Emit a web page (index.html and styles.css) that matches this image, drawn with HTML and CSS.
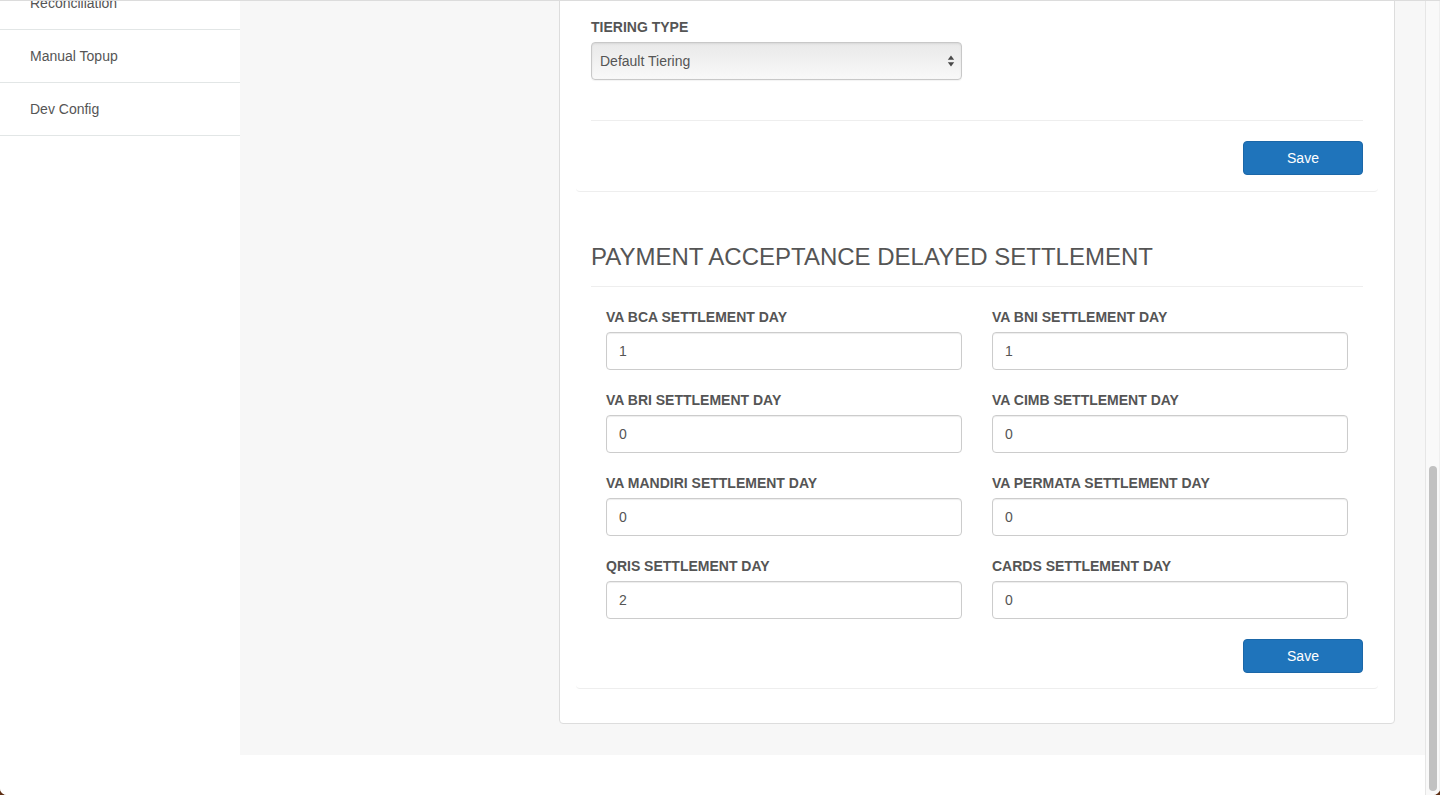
FILE: index.html
```html
<!DOCTYPE html>
<html lang="en">
<head>
<meta charset="utf-8">
<title>Settings</title>
<link rel="stylesheet" href="styles.css">
</head>
<body>
<div class="app">
  <aside class="sidebar">
    <ul class="nav">
      <li class="nav-item">Reconciliation</li>
      <li class="nav-item">Manual Topup</li>
      <li class="nav-item">Dev Config</li>
    </ul>
  </aside>
  <main class="main">
    <div class="content">
      <div class="card">
        <section class="panel panel-first">
          <div class="form-group">
            <label class="label">TIERING TYPE</label>
            <div class="select-wrap">
              <select class="select"><option>Default Tiering</option></select>
              <svg class="select-arrows" width="8" height="12" viewBox="0 0 8 12"><path d="M4 0.5 L7.2 4.8 H0.8 Z M4 11.5 L7.2 7.2 H0.8 Z" fill="#4a4a4a"/></svg>
            </div>
          </div>
          <hr class="rule rule-top">
          <div class="actions"><button class="btn">Save</button></div>
        </section>
        <section class="panel">
          <h3 class="panel-title">PAYMENT ACCEPTANCE DELAYED SETTLEMENT</h3>
          <hr class="rule rule-title">
          <div class="grid">
            <div class="field"><label class="label">VA BCA SETTLEMENT DAY</label><input class="input" value="1"></div>
            <div class="field"><label class="label">VA BNI SETTLEMENT DAY</label><input class="input" value="1"></div>
            <div class="field"><label class="label">VA BRI SETTLEMENT DAY</label><input class="input" value="0"></div>
            <div class="field"><label class="label">VA CIMB SETTLEMENT DAY</label><input class="input" value="0"></div>
            <div class="field"><label class="label">VA MANDIRI SETTLEMENT DAY</label><input class="input" value="0"></div>
            <div class="field"><label class="label">VA PERMATA SETTLEMENT DAY</label><input class="input" value="0"></div>
            <div class="field"><label class="label">QRIS SETTLEMENT DAY</label><input class="input" value="2"></div>
            <div class="field"><label class="label">CARDS SETTLEMENT DAY</label><input class="input" value="0"></div>
          </div>
          <div class="actions"><button class="btn">Save</button></div>
        </section>
      </div>
    </div>
  </main>
  <div class="scrollbar"><div class="thumb"></div></div>
</div>
</body>
</html>
```

FILE: styles.css
```css
html {
  background: #5e2f14;
}
body {
  margin: 0;
  height: 795px;
  background: #ffffff;
  border-radius: 0 0 7px 7px;
  overflow: hidden;
  font-family: "Liberation Sans", Arial, sans-serif;
  color: #555555;
}
.app {
  display: flex;
  height: 794px;
  border-top: 1px solid #dcdcdc;
  overflow: hidden;
}
.sidebar {
  width: 240px;
  flex: none;
  background: #ffffff;
}
.nav {
  list-style: none;
  margin: -24px 0 0 0;
  padding: 0;
}
.nav-item {
  height: 52px;
  line-height: 52px;
  padding-left: 30px;
  font-size: 14px;
  color: #555555;
  border-bottom: 1px solid #e2e6e6;
}
.main {
  flex: 1;
  background: #ffffff;
}
.content {
  background: #f7f7f7;
  padding: 0 30px 31px 319px;
}
.card {
  margin-top: -16px;
  background: #ffffff;
  border: 1px solid #dddddd;
  border-radius: 4px;
  padding: 16px 16px 34px;
}
.panel {
  padding: 15px;
  border-bottom: 1px solid #eeeeee;
  border-radius: 0 0 4px 4px;
}
.panel-first {
  padding-bottom: 16px;
}
.form-group {
  margin-bottom: 0;
}
.label {
  display: block;
  font-size: 14px;
  line-height: 20px;
  font-weight: bold;
  color: #555555;
  margin-bottom: 5px;
}
.select-wrap {
  position: relative;
  width: 371px;
}
.select {
  -webkit-appearance: none;
  appearance: none;
  display: block;
  width: 100%;
  height: 38px;
  margin: 0;
  padding: 0 24px 0 8px;
  font-family: "Liberation Sans", Arial, sans-serif;
  font-size: 14px;
  color: #555555;
  border: 1px solid #c8c8c8;
  border-radius: 4px;
  background: linear-gradient(#e9e9e9 0%, #efefef 40%, #f9f9f9 100%);
  box-shadow: inset 0 1px 2px rgba(0, 0, 0, 0.08), 0 1px 1px rgba(0, 0, 0, 0.05);
}
.select-arrows {
  position: absolute;
  right: 7px;
  top: 13px;
  pointer-events: none;
}
.rule {
  border: 0;
  border-top: 1px solid #eeeeee;
  margin: 0;
}
.rule-top {
  margin: 40px 0 20px;
}
.rule-title {
  margin: 16px 0 20px;
}
.actions {
  display: flex;
  justify-content: flex-end;
}
.btn {
  width: 120px;
  height: 34px;
  font-family: "Liberation Sans", Arial, sans-serif;
  font-size: 14px;
  color: #ffffff;
  background: #1f74bb;
  border: 1px solid #1b67a8;
  border-radius: 4px;
  padding: 0;
}
.panel-title {
  margin: 37px 0 0;
  font-size: 24px;
  line-height: 26px;
  font-weight: normal;
  color: #555555;
}
.grid {
  display: grid;
  grid-template-columns: 1fr 1fr;
  column-gap: 30px;
  padding: 0 15px;
}
.field {
  margin-bottom: 20px;
}
.input {
  display: block;
  box-sizing: border-box;
  width: 100%;
  height: 38px;
  margin: 0;
  padding: 0 12px;
  font-family: "Liberation Sans", Arial, sans-serif;
  font-size: 14px;
  color: #555555;
  border: 1px solid #cccccc;
  border-radius: 4px;
  background: #ffffff;
  box-shadow: inset 0 1px 1px rgba(0, 0, 0, 0.075);
}
.scrollbar {
  width: 15px;
  flex: none;
  box-sizing: border-box;
  background: #f9f9f9;
  border-left: 1px solid #e6e6e6;
  border-right: 1px solid #efefef;
  padding: 465px 2px 4px 3px;
}
.thumb {
  height: 100%;
  background: #c1c1c1;
  border-radius: 4px;
}
```
